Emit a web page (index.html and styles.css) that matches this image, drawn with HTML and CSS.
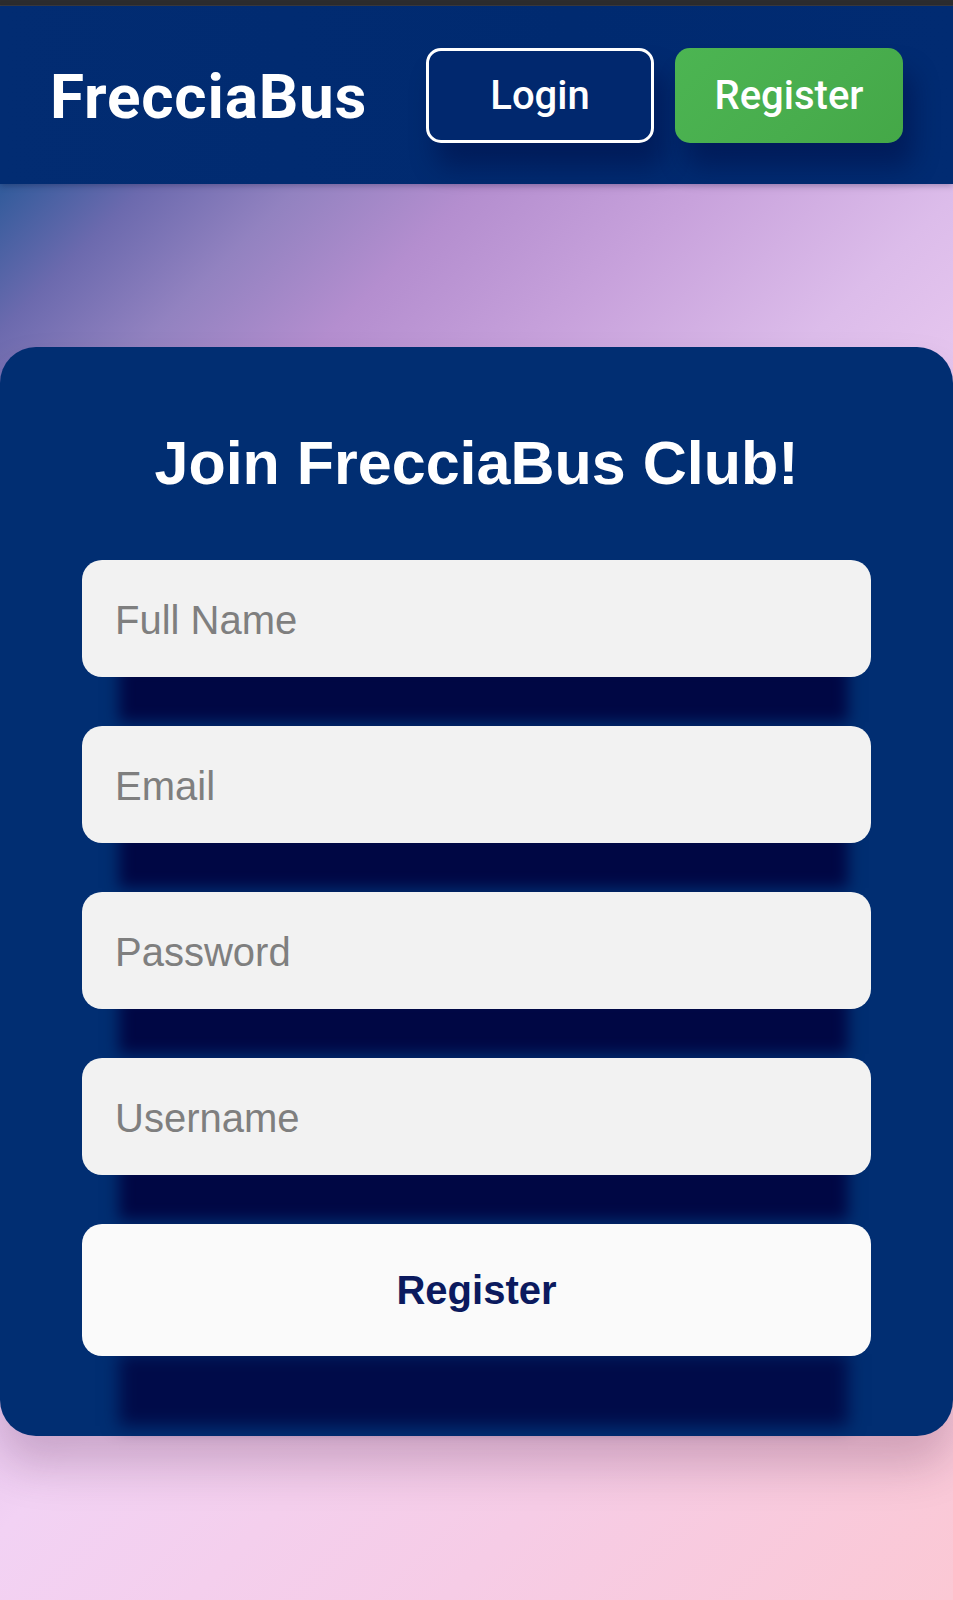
FILE: index.html
```html
<!DOCTYPE html>
<html lang="en">
<head>
<meta charset="utf-8">
<title>FrecciaBus - Register</title>
<link rel="stylesheet" href="styles.css">
</head>
<body>
<div class="topstrip"></div>
<header class="header">
  <div class="logo">FrecciaBus</div>
  <nav class="nav">
    <a class="btn btn-login" href="#">Login</a>
    <a class="btn btn-register" href="#">Register</a>
  </nav>
</header>
<main class="main">
  <section class="card">
    <h1 class="title">Join FrecciaBus Club!</h1>
    <form class="form">
      <input class="field" type="text" placeholder="Full Name">
      <input class="field" type="email" placeholder="Email">
      <input class="field" type="password" placeholder="Password">
      <input class="field" type="text" placeholder="Username">
      <button class="submit" type="button">Register</button>
    </form>
  </section>
</main>
</body>
</html>
```

FILE: styles.css
```css
* { box-sizing: border-box; }

html, body {
  margin: 0;
  padding: 0;
}

body {
  min-height: 1600px;
  font-family: "Liberation Sans", Arial, sans-serif;
  background: linear-gradient(135deg,
    #1a4a92 0%,
    #2e5a9a 7%,
    #6c6aae 13%,
    #9282c0 19%,
    #b48ecf 26%,
    #c8a2dc 35%,
    #dcbcea 45%,
    #f2d2f4 60%,
    #f6cce6 80%,
    #fbc8d4 100%);
  background-attachment: fixed;
}

.topstrip {
  height: 6px;
  background: #2c2c2e;
  border-bottom: 1px solid #3a3a3e;
}

.header {
  height: 178px;
  display: flex;
  align-items: center;
  justify-content: space-between;
  padding: 0 50px;
  background: linear-gradient(90deg, #022c72 0%, #002a70 60%, #012b72 100%);
  box-shadow: 0 2px 6px rgba(0, 0, 40, 0.25);
  position: relative;
}

.logo {
  font-family: Roboto, "Liberation Sans", sans-serif;
  font-weight: 700;
  font-size: 62px;
  letter-spacing: 0.8px;
  color: #ffffff;
  margin-top: 2px;
}

.nav {
  display: flex;
  gap: 21px;
  margin-top: 1px;
}

.btn {
  width: 228px;
  height: 95px;
  border-radius: 15px;
  display: flex;
  align-items: center;
  justify-content: center;
  font-family: Roboto, "Liberation Sans", sans-serif;
  font-weight: 500;
  font-size: 40px;
  color: #ffffff;
  text-decoration: none;
  box-shadow: 10px 24px 26px rgba(0, 0, 50, 0.35);
}

.btn-login {
  border: 3.5px solid #ffffff;
  background: #01286e;
}

.btn-register {
  background: linear-gradient(135deg, #4cb552 0%, #48ad4d 60%, #44a847 100%);
}

.main {
  padding-top: 163px;
}

.card {
  background: #012e72;
  border-radius: 36px;
  padding: 81px 82px 81px 82px;
  box-shadow: 0 30px 45px rgba(70, 20, 60, 0.22);
  height: 1089px;
}

.title {
  margin: 0 0 62px 0;
  font-family: "Liberation Sans", Arial, sans-serif;
  font-weight: 700;
  font-size: 61px;
  line-height: 70px;
  color: #ffffff;
  text-align: center;
}

.form {
  display: flex;
  flex-direction: column;
  gap: 49px;
}

.field {
  display: block;
  width: 100%;
  height: 117px;
  border: none;
  outline: none;
  border-radius: 20px;
  background: #f2f2f2;
  padding: 3px 33px 0 33px;
  font-family: "Liberation Sans", Arial, sans-serif;
  font-size: 40px;
  color: #333333;
  box-shadow: 7px 75px 14px -30px rgba(0, 0, 60, 0.85);
}

.field::placeholder {
  color: #7f7f7f;
  opacity: 1;
}

.submit {
  display: block;
  width: 100%;
  height: 132px;
  border: none;
  border-radius: 20px;
  background: #fafafa;
  font-family: "Liberation Sans", Arial, sans-serif;
  font-weight: 700;
  font-size: 40px;
  color: #0b1a5e;
  cursor: pointer;
  box-shadow: 7px 100px 16px -30px rgba(0, 0, 60, 0.75);
}
```
